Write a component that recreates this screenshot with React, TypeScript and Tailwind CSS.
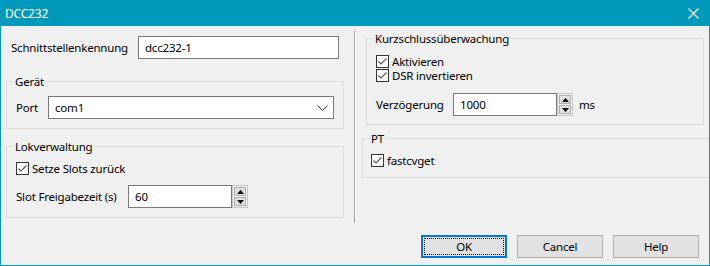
import React from 'react';

const font = "font-['Segoe_UI','Noto_Sans',sans-serif] text-[11.5px] tracking-[-0.2px] leading-[15px]";

const CheckBox: React.FC<{ label: string }> = ({ label }) => (
  <div className="flex items-center h-[13px] leading-[13px]">
    <span className="w-[13px] h-[13px] border border-[#333333] bg-white flex items-center justify-center shrink-0">
      <svg width="11" height="11" viewBox="0 0 11 11">
        <path d="M1.5 5.5 L4 8 L9.5 2.5" fill="none" stroke="#555555" strokeWidth="1.1" />
      </svg>
    </span>
    <span className="ml-[3px] text-black">{label}</span>
  </div>
);

const GroupBox: React.FC<{ title: string; className?: string; children: React.ReactNode }> = ({ title, className, children }) => (
  <div className={`relative border border-[#dcdcdc] ${className ?? ''}`}>
    <span className="absolute -top-[8px] left-[7px] px-[1px] bg-[#f0f0f0] leading-[15px]">{title}</span>
    {children}
  </div>
);

const Spinner: React.FC = () => (
  <div className="flex flex-col h-[23px] w-[16px] shrink-0 border border-[#c8c8c8] bg-[#f0f0f0] p-[1px] gap-[1px]">
    <div className="flex-1 border border-[#adadad] bg-[#e1e1e1] flex items-center justify-center">
      <svg width="7" height="4" viewBox="0 0 7 4"><path d="M3.5 0 L7 4 L0 4 Z" fill="#000" /></svg>
    </div>
    <div className="flex-1 border border-[#adadad] bg-[#e1e1e1] flex items-center justify-center">
      <svg width="7" height="4" viewBox="0 0 7 4"><path d="M0 0 L7 0 L3.5 4 Z" fill="#000" /></svg>
    </div>
  </div>
);

const TextInput: React.FC<{ value: string; className: string }> = ({ value, className }) => (
  <div className={`h-[23px] shrink-0 border border-[#7a7a7a] bg-white flex items-center pl-[6px] ${className}`}>{value}</div>
);

const Btn: React.FC<{ label: string; primary?: boolean }> = ({ label, primary }) => (
  <div
    className={`w-[86px] h-[23px] flex items-center justify-center bg-[#e1e1e1] ${
      primary ? 'border-2 border-[#0078d7] p-[1px]' : 'border border-[#adadad]'
    }`}
  >
    {primary ? (
      <div className="w-full h-full border border-dotted border-black flex items-center justify-center">{label}</div>
    ) : (
      label
    )}
  </div>
);

export default function App() {
  return (
    <div className={`w-[710px] h-[266px] bg-[#0099bc] flex flex-col text-black ${font}`}>
      <div className="h-[26px] shrink-0 flex items-center justify-between pl-[5px] pr-[11px] text-white">
        <span className="text-[12px]">DCC232</span>
        <svg width="11" height="11" viewBox="0 0 11 11">
          <path d="M0.5 0.5 L10.5 10.5 M10.5 0.5 L0.5 10.5" stroke="#fff" strokeWidth="1.1" />
        </svg>
      </div>
      <div className="flex-1 mx-[1px] mb-[1px] bg-[#f0f0f0] flex flex-col">
        <div className="flex">
          {/* left column */}
          <div className="w-[338px] ml-[5px] flex flex-col">
            <div className="mt-[10px] flex items-center h-[23px]">
              <span className="ml-[5px] w-[127px] shrink-0">Schnittstellenkennung</span>
              <TextInput value="dcc232-1" className="w-[201px]" />
            </div>
            <GroupBox title="Gerät" className="mt-[22px] h-[48px] pt-[14px] pl-[9px]">
              <div className="flex items-center">
                <span className="w-[32px] shrink-0">Port</span>
                <div className="w-[286px] h-[23px] border border-[#7a7a7a] bg-white flex items-center justify-between pl-[6px] pr-[5px]">
                  <span>com1</span>
                  <svg width="11" height="6" viewBox="0 0 11 6">
                    <path d="M0.5 0.5 L5.5 5.5 L10.5 0.5" fill="none" stroke="#333" strokeWidth="1" />
                  </svg>
                </div>
              </div>
            </GroupBox>
            <GroupBox title="Lokverwaltung" className="mt-[17px] h-[72px] pt-[15px] pl-[9px]">
              <CheckBox label="Setze Slots zurück" />
              <div className="mt-[10px] flex items-center">
                <span className="w-[112px] shrink-0">Slot Freigabezeit (s)</span>
                <TextInput value="60" className="w-[104px]" />
                <Spinner />
              </div>
            </GroupBox>
          </div>
          {/* separator */}
          <div className="ml-[10px] mt-[5px] h-[192px] w-[2px] border-l border-[#a0a0a0] border-r border-r-white" />
          {/* right column */}
          <div className="flex-1 ml-[6px] flex flex-col">
            <GroupBox title="Kurzschlussüberwachung" className="ml-[4px] w-[338px] mt-[12px] h-[87px] pt-[16px] pl-[9px]">
              <div className="flex flex-col gap-[1px]">
                <CheckBox label="Aktivieren" />
                <CheckBox label="DSR invertieren" />
              </div>
              <div className="mt-[11px] flex items-center">
                <span className="w-[77px] shrink-0">Verzögerung</span>
                <TextInput value="1000" className="w-[104px]" />
                <Spinner />
                <span className="ml-[6px]">ms</span>
              </div>
            </GroupBox>
            <GroupBox title="PT" className="mt-[13px] h-[40px] pt-[15px] pl-[8px] border-r-0">
              <CheckBox label="fastcvget" />
            </GroupBox>
          </div>
        </div>
        <div className="mt-auto mb-[7px] mr-[10px] flex justify-end gap-[10px]">
          <Btn label="OK" primary />
          <Btn label="Cancel" />
          <Btn label="Help" />
        </div>
      </div>
    </div>
  );
}
